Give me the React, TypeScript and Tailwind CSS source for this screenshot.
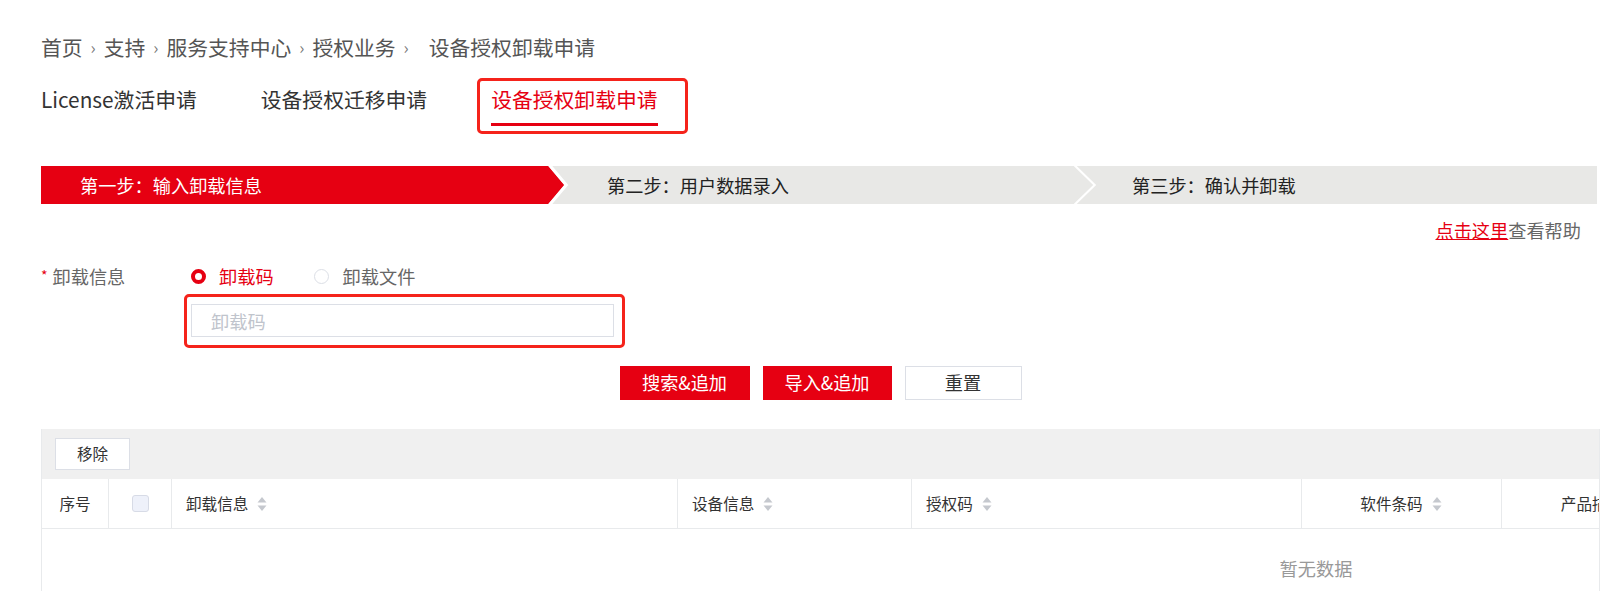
import React from "react";

function Sep({ last = false }: { last?: boolean }) {
  return (
    <span className={last ? "ml-[8px] mr-[20px] text-[17px] text-[#777]" : "mx-[8px] text-[17px] text-[#777]"}>›</span>
  );
}

function SortIcon() {
  return (
    <svg width="12" height="18" viewBox="0 0 12 18" className="ml-[8px] shrink-0">
      <path d="M6 2 L10.5 7.5 H1.5 Z" fill="#c5c8ce" />
      <path d="M6 16 L10.5 10.5 H1.5 Z" fill="#c5c8ce" />
    </svg>
  );
}

function Boundary({ red }: { red: boolean }) {
  if (red) {
    return (
      <svg
        width="24"
        height="38"
        viewBox="0 0 24 38"
        className="absolute top-0 right-[-10px] z-10"
      >
        <rect x="0" y="0" width="24" height="38" fill="#e8e8e6" />
        <polygon points="0,0 2.3,0 18.3,19 2.3,38 0,38" fill="#e60012" />
        <polygon points="2.3,0 6.3,0 22.3,19 6.3,38 2.3,38 18.3,19" fill="#ffffff" />
      </svg>
    );
  }
  return (
    <svg
      width="24"
      height="38"
      viewBox="0 0 24 38"
      className="absolute top-0 right-[-18px] z-10"
    >
      <polygon points="0.7,0 3.7,0 23.2,19 3.7,38 0.7,38 20.2,19" fill="#ffffff" />
    </svg>
  );
}

export default function App() {
  return (
    <div className="h-screen overflow-hidden bg-white pl-[41px] pr-[13px] font-['Noto_Sans_CJK_SC','Noto_Sans',sans-serif]">
      {/* Breadcrumb */}
      <div className="pt-[33px] flex items-center text-[20.8px] leading-[28px] text-[#555]">
        <span>首页</span>
        <Sep />
        <span>支持</span>
        <Sep />
        <span>服务支持中心</span>
        <Sep />
        <span>授权业务</span>
        <Sep last />
        <span>设备授权卸载申请</span>
      </div>

      {/* Tabs */}
      <div className="mt-[24px] flex gap-[64px] text-[20.8px] leading-[28px]">
        <div className="flex flex-col">
          <span className="text-[#333]">License激活申请</span>
          <div className="mt-[10px] h-[3px]" />
        </div>
        <div className="flex flex-col">
          <span className="text-[#333]">设备授权迁移申请</span>
          <div className="mt-[10px] h-[3px]" />
        </div>
        <div className="relative flex flex-col">
          <span className="text-[#e60012]">设备授权卸载申请</span>
          <div className="mt-[10px] h-[3px] bg-[#e60012]" />
          <div className="pointer-events-none absolute -left-[14px] -right-[30px] -top-[7px] -bottom-[8px] rounded-[5px] border-[3px] border-[#f5231b]" />
        </div>
      </div>

      {/* Steps */}
      <div className="mt-[40px] mr-[3px] flex h-[38px] bg-[#e8e8e6] text-[18.2px] leading-[38px]">
        <div className="relative w-[519px] shrink-0 bg-[#e60012] pl-[39px] text-white">
          第一步：输入卸载信息
          <Boundary red />
        </div>
        <div className="relative w-[519px] shrink-0 pl-[47px] text-[#222]">
          第二步：用户数据录入
          <Boundary red={false} />
        </div>
        <div className="relative flex-1 pl-[53px] text-[#222]">第三步：确认并卸载</div>
      </div>

      {/* Help */}
      <div className="mt-[14px] pr-[19px] text-right text-[18.2px] leading-[24px]">
        <span className="text-[#e60012] underline">点击这里</span>
        <span className="text-[#666]">查看帮助</span>
      </div>

      {/* Form */}
      <div className="mt-[22px] flex">
        <div className="w-[150px] shrink-0 flex items-start text-[18.2px] leading-[24px] text-[#666]">
          <span className="mr-[5px] text-[14px] leading-[22px] text-[#e60012]">*</span>
          <span>卸载信息</span>
        </div>
        <div className="flex flex-col">
          <div className="flex h-[24px] items-center text-[18.2px] leading-[24px]">
            <span className="box-border h-[15px] w-[15px] rounded-full border-[4.5px] border-[#e60012] bg-white" />
            <span className="ml-[13px] text-[#e60012]">卸载码</span>
            <span className="ml-[40px] box-border h-[15px] w-[15px] rounded-full border border-[#dcdfe6] bg-white" />
            <span className="ml-[14px] text-[#666]">卸载文件</span>
          </div>
          <div className="relative mt-[16px] w-[423px]">
            <input
              placeholder="卸载码"
              className="box-border h-[33px] w-full border border-[#dcdfe6] pl-[19px] text-[18.2px] text-[#333] outline-none placeholder:text-[#c0c4cc]"
            />
            <div className="pointer-events-none absolute -left-[7px] -right-[11px] -top-[10px] -bottom-[11px] rounded-[5px] border-[3px] border-[#f5231b]" />
          </div>
        </div>
      </div>

      {/* Buttons */}
      <div className="mt-[29px] flex justify-center gap-[13px] text-[18.2px]">
        <button className="h-[34px] w-[130px] bg-[#e60012] text-white">搜索&amp;追加</button>
        <button className="h-[34px] w-[129px] bg-[#e60012] text-white">导入&amp;追加</button>
        <button className="box-border h-[34px] w-[117px] border border-[#dcdfe6] bg-white text-[#333]">重置</button>
      </div>

      {/* Table */}
      <div className="mt-[29px] border-x border-[#e8eaec]">
        <div className="h-[50px] bg-[#f0f0f0] pl-[13px] pt-[9px]">
          <button className="box-border h-[32px] w-[75px] border border-[#dcdfe6] bg-white text-[15.6px] text-[#333]">
            移除
          </button>
        </div>
        <div className="overflow-hidden">
          <div className="w-[2548px]">
            <div className="box-border flex h-[50px] border-b border-[#e8eaec] text-[15.6px] text-[#333]">
              <div className="flex w-[67px] shrink-0 items-center justify-center border-r border-[#e8eaec]">序号</div>
              <div className="flex w-[63px] shrink-0 items-center justify-center border-r border-[#e8eaec]">
                <span className="box-border h-[17px] w-[17px] rounded-[3px] border border-[#d7dbe6] bg-[#eef1fa]" />
              </div>
              <div className="flex w-[506px] shrink-0 items-center border-r border-[#e8eaec] pl-[14px]">
                卸载信息
                <SortIcon />
              </div>
              <div className="flex w-[234px] shrink-0 items-center border-r border-[#e8eaec] pl-[14px]">
                设备信息
                <SortIcon />
              </div>
              <div className="flex w-[390px] shrink-0 items-center border-r border-[#e8eaec] pl-[14px]">
                授权码
                <SortIcon />
              </div>
              <div className="flex w-[200px] shrink-0 items-center justify-center border-r border-[#e8eaec]">
                软件条码
                <SortIcon />
              </div>
              <div className="flex w-[201px] shrink-0 items-center justify-center border-r border-[#e8eaec]">
                产品描述
                <SortIcon />
              </div>
              <div className="flex-1" />
            </div>
            <div className="flex h-[80px] items-center justify-center text-[18.2px] text-[#999]">暂无数据</div>
          </div>
        </div>
      </div>
    </div>
  );
}
